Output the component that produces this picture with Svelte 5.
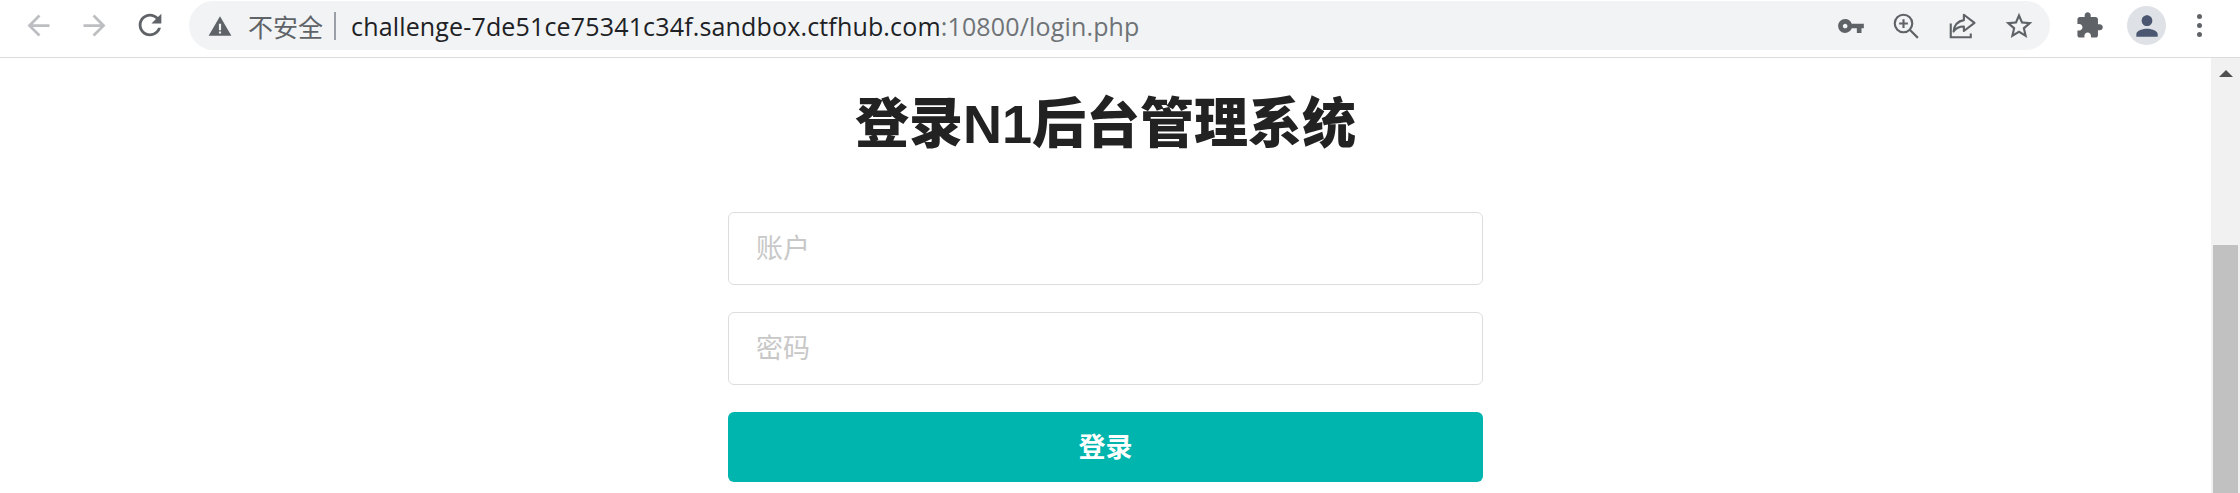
<script lang="ts">
	const paths = {
		back: 'M20 11H7.83l5.59-5.59L12 4l-8 8 8 8 1.41-1.41L7.83 13H20v-2z',
		forward: 'M4 11h12.17l-5.59-5.59L12 4l8 8-8 8-1.41-1.41L16.17 13H4v-2z',
		reload: 'M17.65 6.35C16.2 4.9 14.21 4 12 4c-4.42 0-7.99 3.58-7.99 8s3.57 8 7.99 8c3.73 0 6.84-2.55 7.73-6h-2.08c-.82 2.33-3.04 4-5.65 4-3.31 0-6-2.69-6-6s2.69-6 6-6c1.66 0 3.14.69 4.22 1.78L13 11h7V4l-2.35 2.35z',
		key: 'M12.65 10C11.83 7.67 9.61 6 7 6c-3.31 0-6 2.69-6 6s2.69 6 6 6c2.61 0 4.83-1.67 5.65-4H17v4h4v-4h2v-4H12.65zM7 14c-1.1 0-2-.9-2-2s.9-2 2-2 2 .9 2 2-.9 2-2 2z',
		star: 'M22 9.24l-7.19-.62L12 2 9.19 8.63 2 9.24l5.46 4.73L5.82 21 12 17.27 18.18 21l-1.63-7.03L22 9.24zM12 15.4l-3.76 2.27 1-4.28-3.32-2.88 4.38-.38L12 6.1l1.71 4.04 4.38.38-3.32 2.88 1 4.28L12 15.4z',
		puzzle: 'M20.5 11H19V7c0-1.1-.9-2-2-2h-4V3.5C13 2.12 11.88 1 10.5 1S8 2.12 8 3.5V5H4c-1.1 0-1.99.9-1.99 2v3.8H3.5c1.49 0 2.7 1.21 2.7 2.7s-1.21 2.7-2.7 2.7H2V20c0 1.1.9 2 2 2h3.8v-1.5c0-1.49 1.21-2.7 2.7-2.7 1.49 0 2.7 1.21 2.7 2.7V22H17c1.1 0 2-.9 2-2v-4h1.5c1.38 0 2.5-1.12 2.5-2.5S21.88 11 20.5 11z',
		person: 'M12 12c2.21 0 4-1.79 4-4s-1.79-4-4-4-4 1.79-4 4 1.79 4 4 4zm0 2c-2.67 0-8 1.34-8 4v2h16v-2c0-2.66-5.33-4-8-4z'
	};
</script>

<div class="window">
	<header class="toolbar">
		<span class="nav muted"><svg viewBox="0 0 24 24" width="33" height="33"><path d={paths.back} /></svg></span>
		<span class="nav muted"><svg viewBox="0 0 24 24" width="33" height="33"><path d={paths.forward} /></svg></span>
		<span class="nav"><svg viewBox="0 0 24 24" width="34" height="34"><path d={paths.reload} /></svg></span>

		<div class="omnibox">
			<svg class="warn" viewBox="0 0 24 24" width="26" height="26">
				<path d="M12 3 1.5 21h21L12 3z" fill="#5f6368" />
				<path d="M11 10h2v6h-2zM11 17h2v2h-2z" fill="#f1f3f4" />
			</svg>
			<span class="secure">不安全</span>
			<span class="sep"></span>
			<span class="url">challenge-7de51ce75341c34f.sandbox.ctfhub.com<span class="url-dim">:10800/login.php</span></span>
			<div class="omni-icons">
				<svg viewBox="0 0 24 24" width="28" height="28"><path d={paths.key} /></svg>
				<svg viewBox="0 0 24 24" width="30" height="30" class="line">
					<circle cx="10" cy="10" r="7" />
					<path d="M15 15l6.500 6.500M10 6.500v7M6.500 10h7" />
				</svg>
				<svg viewBox="0 0 24 24" width="30" height="30" class="line">
					<path d="M3 10v11h16v-3" />
					<path d="M13.500 3 22 9.500l-8.500 6.500v-3.600c-3.600 0-6.200 1-8.200 4 .5-4.700 3.200-8.300 8.200-9.100V3z" stroke-linejoin="round" />
				</svg>
				<svg viewBox="0 0 24 24" width="32" height="32"><path d={paths.star} /></svg>
			</div>
		</div>

		<span class="ext"><svg viewBox="0 0 24 24" width="29" height="29"><path d={paths.puzzle} /></svg></span>
		<span class="avatar"><svg viewBox="0 0 24 24" width="32" height="32"><path d={paths.person} /></svg></span>
		<span class="dots"><i></i><i></i><i></i></span>
	</header>

	<div class="viewport">
		<main class="page">
			<h1>登录N1后台管理系统</h1>
			<form class="login" onsubmit={(e) => e.preventDefault()}>
				<input type="text" placeholder="账户" />
				<input type="password" placeholder="密码" />
				<button type="submit">登录</button>
			</form>
		</main>
		<div class="scrollbar">
			<span class="arrow"></span>
			<span class="thumb"></span>
		</div>
	</div>
</div>

<style>
	:global(body) { margin: 0; background: #fff; overflow: hidden; }

	.window {
		width: 2240px; height: 493px; overflow: hidden;
		display: flex; flex-direction: column;
		font-family: "Liberation Sans", "Noto Sans CJK SC", sans-serif;
	}

	/* ── Toolbar ── */
	.toolbar {
		height: 57px; flex-shrink: 0; box-sizing: content-box;
		display: flex; align-items: flex-start;
		border-bottom: 1px solid #dadce0;
		background: #fff;
	}
	.nav {
		width: 56px; height: 50px; flex-shrink: 0;
		display: flex; align-items: center; justify-content: center;
		fill: #5f6368;
	}
	.nav:first-child { margin-left: 10px; }
	.nav.muted { fill: #bcbec1; }

	.omnibox {
		width: 1861px; height: 49px; margin: 1px 0 0 11px; padding-left: 18px;
		box-sizing: border-box; flex-shrink: 0;
		display: flex; align-items: center;
		background: #f1f3f4; border-radius: 25px;
	}
	.warn { flex-shrink: 0; }
	.secure {
		margin-left: 15px;
		font: 25px "Noto Sans CJK SC", sans-serif; color: #5f6368;
	}
	.sep { width: 2px; height: 28px; margin: 0 15px 0 11px; background: #9aa0a6; }
	.url {
		font: 25px "Open Sans", "Noto Sans", sans-serif; color: #202124;
		white-space: nowrap; letter-spacing: 0.16px;
	}
	.url-dim { color: #6f7377; }
	.omni-icons {
		margin-left: auto; margin-right: 15px;
		display: flex; align-items: center; gap: 26px;
		fill: #5f6368;
	}
	.line { fill: none; stroke: #5f6368; stroke-width: 1.7; }

	.ext {
		width: 29px; height: 50px; margin-left: 25px;
		display: flex; align-items: center; fill: #5f6368;
	}
	.avatar {
		width: 39px; height: 39px; margin: 6px 0 0 23px; border-radius: 50%;
		display: flex; align-items: center; justify-content: center;
		background: #dee1e6; fill: #4b5770;
	}
	.dots {
		height: 50px; margin-left: 31px;
		display: flex; flex-direction: column; align-items: center; justify-content: center; gap: 4px;
	}
	.dots i { width: 5px; height: 5px; border-radius: 50%; background: #5f6368; }

	/* ── Page ── */
	.viewport { flex: 1; min-height: 0; display: flex; }
	.page { flex: 1; min-width: 0; display: flex; flex-direction: column; align-items: center; }
	h1 {
		margin: 33px 0 0; height: 66px;
		font-size: 54px; line-height: 66px; font-weight: 900; color: #222;
		font-family: "Liberation Sans", "Noto Sans CJK SC", sans-serif;
	}
	.login {
		width: 755px; margin-top: 55px;
		display: flex; flex-direction: column; gap: 27px;
	}
	input {
		height: 73px; padding: 0 27px 4px; box-sizing: border-box;
		background: #fff; border: 1px solid #ddd; border-radius: 6px;
		font: 27px "Noto Sans CJK SC", sans-serif; color: #222;
		outline: none;
	}
	input::placeholder { color: #c8c8c8; opacity: 1; }
	button {
		height: 70px; padding: 0 0 4px; border: 0; border-radius: 6px;
		background: #00b5ad; color: #fff;
		font: 700 27px "Noto Sans CJK SC", sans-serif;
	}

	/* ── Scrollbar ── */
	.scrollbar {
		width: 29px; flex-shrink: 0;
		display: flex; flex-direction: column; align-items: center;
		background: #f1f1f1;
	}
	.arrow {
		margin-top: 12px; width: 0; height: 0;
		border-left: 7px solid transparent; border-right: 7px solid transparent;
		border-bottom: 7px solid #505050;
	}
	.thumb { width: 25px; margin-top: 168px; flex: 1; background: #c1c1c1; }
</style>
